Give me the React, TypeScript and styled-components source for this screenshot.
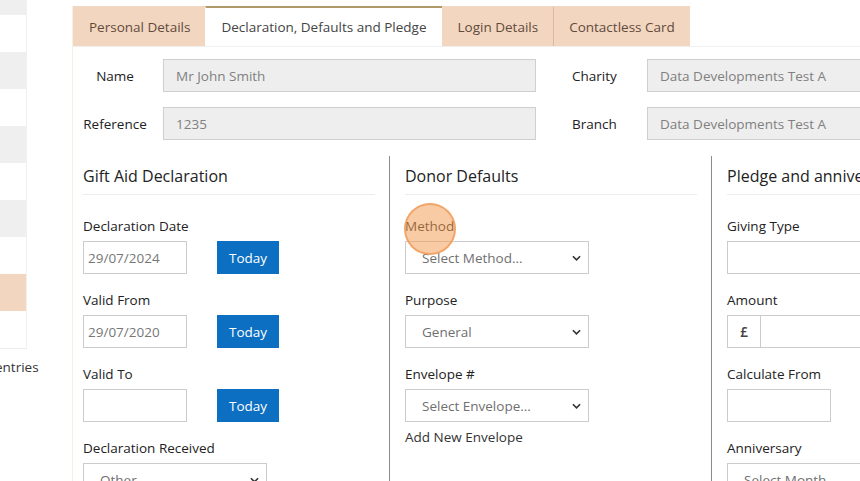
import React from "react";
import styled, { createGlobalStyle } from "styled-components";

const GlobalStyle = createGlobalStyle`
  html, body {
    margin: 0;
    padding: 0;
    background: #fff;
    overflow: hidden;
  }
  body {
    font-family: "Open Sans", "Liberation Sans", sans-serif;
    font-size: 13.5px;
    color: #222;
  }
  * {
    box-sizing: border-box;
  }
`;

const tabs = [
  { label: "Personal Details", active: false },
  { label: "Declaration, Defaults and Pledge", active: true },
  { label: "Login Details", active: false },
  { label: "Contactless Card", active: false, divider: true },
];

const stripRows = ["gray", "white", "gray", "white", "gray", "white", "gray", "white", "peach", "white"];

const App = () => {
  return (
    <>
      <GlobalStyle />
      <Page>
        <LeftCol>
          <Strip>
            {stripRows.map((tone, i) => (
              <StripRow key={i} $tone={tone} />
            ))}
          </Strip>
          <EntriesText>entries</EntriesText>
        </LeftCol>

        <Panel>
          <TabList>
            {tabs.map((tab) => (
              <Tab key={tab.label} $active={tab.active} $divider={tab.divider}>
                {tab.label}
              </Tab>
            ))}
          </TabList>

          <InfoGrid>
            <InfoLabel>Name</InfoLabel>
            <ReadOnlyInput $width={373}>Mr John Smith</ReadOnlyInput>
            <InfoLabel $right>Charity</InfoLabel>
            <ReadOnlyInput>Data Developments Test A</ReadOnlyInput>

            <InfoLabel>Reference</InfoLabel>
            <ReadOnlyInput $width={373}>1235</ReadOnlyInput>
            <InfoLabel $right>Branch</InfoLabel>
            <ReadOnlyInput>Data Developments Test A</ReadOnlyInput>
          </InfoGrid>

          <Columns>
            <Column $first>
              <SectionTitle>Gift Aid Declaration</SectionTitle>
              <Field>
                <FieldLabel>Declaration Date</FieldLabel>
                <InlineRow>
                  <DateBox>29/07/2024</DateBox>
                  <TodayButton>Today</TodayButton>
                </InlineRow>
              </Field>
              <Field>
                <FieldLabel>Valid From</FieldLabel>
                <InlineRow>
                  <DateBox>29/07/2020</DateBox>
                  <TodayButton>Today</TodayButton>
                </InlineRow>
              </Field>
              <Field>
                <FieldLabel>Valid To</FieldLabel>
                <InlineRow>
                  <DateBox />
                  <TodayButton>Today</TodayButton>
                </InlineRow>
              </Field>
              <Field>
                <FieldLabel>Declaration Received</FieldLabel>
                <SelectBox>
                  <span>Other</span>
                  <Chevron />
                </SelectBox>
              </Field>
            </Column>

            <Column>
              <SectionTitle>Donor Defaults</SectionTitle>
              <Field>
                <FieldLabel>Method</FieldLabel>
                <SelectBox>
                  <span>Select Method...</span>
                  <Chevron />
                </SelectBox>
                <ClickMarker />
              </Field>
              <Field>
                <FieldLabel>Purpose</FieldLabel>
                <SelectBox>
                  <span>General</span>
                  <Chevron />
                </SelectBox>
              </Field>
              <Field>
                <FieldLabel>Envelope #</FieldLabel>
                <SelectBox>
                  <span>Select Envelope...</span>
                  <Chevron />
                </SelectBox>
                <LinkText>Add New Envelope</LinkText>
              </Field>
            </Column>

            <Column>
              <SectionTitle>Pledge and anniversary</SectionTitle>
              <Field>
                <FieldLabel>Giving Type</FieldLabel>
                <TextBox />
              </Field>
              <Field>
                <FieldLabel>Amount</FieldLabel>
                <InputGroup>
                  <Addon>£</Addon>
                  <GroupInput />
                </InputGroup>
              </Field>
              <Field>
                <FieldLabel>Calculate From</FieldLabel>
                <InlineRow>
                  <DateBox />
                  <TodayButton $faded>Today</TodayButton>
                </InlineRow>
              </Field>
              <Field>
                <FieldLabel>Anniversary</FieldLabel>
                <SelectBox>
                  <span>Select Month...</span>
                  <Chevron />
                </SelectBox>
              </Field>
            </Column>
          </Columns>
        </Panel>
      </Page>
    </>
  );
};

const Chevron = () => (
  <ChevronSvg viewBox="0 0 10 6" width="9" height="6">
    <path d="M1 1 L5 5 L9 1" fill="none" stroke="#333" strokeWidth="1.8" />
  </ChevronSvg>
);

export default App;

// layout

const Page = styled.div`
  display: flex;
  width: 860px;
  height: 481px;
  overflow: hidden;
`;

const LeftCol = styled.div`
  width: 72px;
  flex-shrink: 0;
`;

const Strip = styled.div`
  width: 27px;
  margin-top: -22px;
  border-right: 1px solid #f1f1f1;
  border-bottom: 1px solid #ececec;
`;

const StripRow = styled.div<{ $tone: string }>`
  height: 37px;
  background: ${({ $tone }) =>
    $tone === "gray" ? "#efefef" : $tone === "peach" ? "#f3d6c0" : "#fff"};
`;

const EntriesText = styled.div`
  margin-top: 9px;
  margin-left: -5px;
  color: #333;
`;

// panel and tabs

const Panel = styled.div`
  flex: 1;
  min-width: 0;
  margin-top: 6px;
  border-left: 1px solid #f7efe7;
`;

const TabList = styled.div`
  display: flex;
  height: 41px;
  border-bottom: 1px solid #f0f0f0;
`;

const Tab = styled.div<{ $active?: boolean; $divider?: boolean }>`
  display: flex;
  align-items: center;
  padding: 0 15px;
  white-space: nowrap;
  background: ${({ $active }) => ($active ? "#fff" : "#f3d6c0")};
  color: ${({ $active }) => ($active ? "#444" : "#5f4b3c")};
  border-top: 2px solid ${({ $active }) => ($active ? "#b09968" : "transparent")};
  border-left: 1px solid ${({ $divider }) => ($divider ? "#dcb89c" : "transparent")};
`;

// top info

const InfoGrid = styled.div`
  display: grid;
  grid-template-columns: 64px 373px 45px 1fr;
  column-gap: 16px;
  row-gap: 15px;
  align-items: center;
  padding: 12px 0 0 10px;
  & > :nth-child(3),
  & > :nth-child(7) {
    margin-left: 20px;
  }
  & > :nth-child(4),
  & > :nth-child(8) {
    margin-left: 34px;
  }
`;

const InfoLabel = styled.div<{ $right?: boolean }>`
  text-align: ${({ $right }) => ($right ? "left" : "center")};
  color: #222;
  white-space: nowrap;
`;

const ReadOnlyInput = styled.div<{ $width?: number }>`
  height: 33px;
  width: ${({ $width }) => ($width ? `${$width}px` : "auto")};
  min-width: 240px;
  display: flex;
  align-items: center;
  padding-left: 12px;
  background: #eeeeee;
  border: 1px solid #cfcfcf;
  color: #808080;
  white-space: nowrap;
`;

// columns

const Columns = styled.div`
  display: grid;
  grid-template-columns: 316px 322px 322px;
  margin-top: 16px;
`;

const Column = styled.div<{ $first?: boolean }>`
  padding: 8px 14px 0 ${({ $first }) => ($first ? "10px" : "15px")};
  border-left: ${({ $first }) => ($first ? "none" : "1px solid #8c8c8c")};
  min-height: 330px;
`;

const SectionTitle = styled.h3`
  margin: 0 0 21px;
  padding-bottom: 6px;
  border-bottom: 1px solid #ececec;
  font-size: 16px;
  font-weight: 400;
  line-height: 24px;
  color: #222;
  white-space: nowrap;
`;

const Field = styled.div`
  position: relative;
  margin-bottom: 16px;
`;

const FieldLabel = styled.div`
  line-height: 20px;
  margin-bottom: 5px;
  color: #222;
`;

const InlineRow = styled.div`
  display: flex;
  gap: 30px;
`;

const DateBox = styled.div`
  width: 104px;
  height: 33px;
  display: flex;
  align-items: center;
  padding-left: 4px;
  border: 1px solid #cccccc;
  color: #777;
`;

const TodayButton = styled.div<{ $faded?: boolean }>`
  width: 62px;
  height: 33px;
  display: flex;
  align-items: center;
  justify-content: center;
  background: #0c6fc1;
  color: #fff;
  opacity: ${({ $faded }) => ($faded ? 0.12 : 1)};
`;

const SelectBox = styled.div`
  width: 184px;
  height: 33px;
  display: flex;
  align-items: center;
  justify-content: space-between;
  padding: 0 7px 0 16px;
  border: 1px solid #cccccc;
  color: #707070;
`;

const ChevronSvg = styled.svg`
  display: block;
`;

const TextBox = styled.div`
  width: 292px;
  height: 33px;
  border: 1px solid #cccccc;
`;

const InputGroup = styled.div`
  display: flex;
  width: 292px;
  height: 33px;
  border: 1px solid #cccccc;
`;

const Addon = styled.div`
  width: 33px;
  display: flex;
  align-items: center;
  justify-content: center;
  border-right: 1px solid #cccccc;
  font-weight: 600;
  color: #444;
`;

const GroupInput = styled.div`
  flex: 1;
`;

const LinkText = styled.div`
  margin-top: 6px;
  color: #333;
`;

const ClickMarker = styled.div`
  position: absolute;
  left: -1px;
  top: -13px;
  width: 52px;
  height: 52px;
  border-radius: 50%;
  background: rgba(244, 160, 90, 0.55);
  border: 2px solid rgba(240, 150, 80, 0.7);
  pointer-events: none;
`;
